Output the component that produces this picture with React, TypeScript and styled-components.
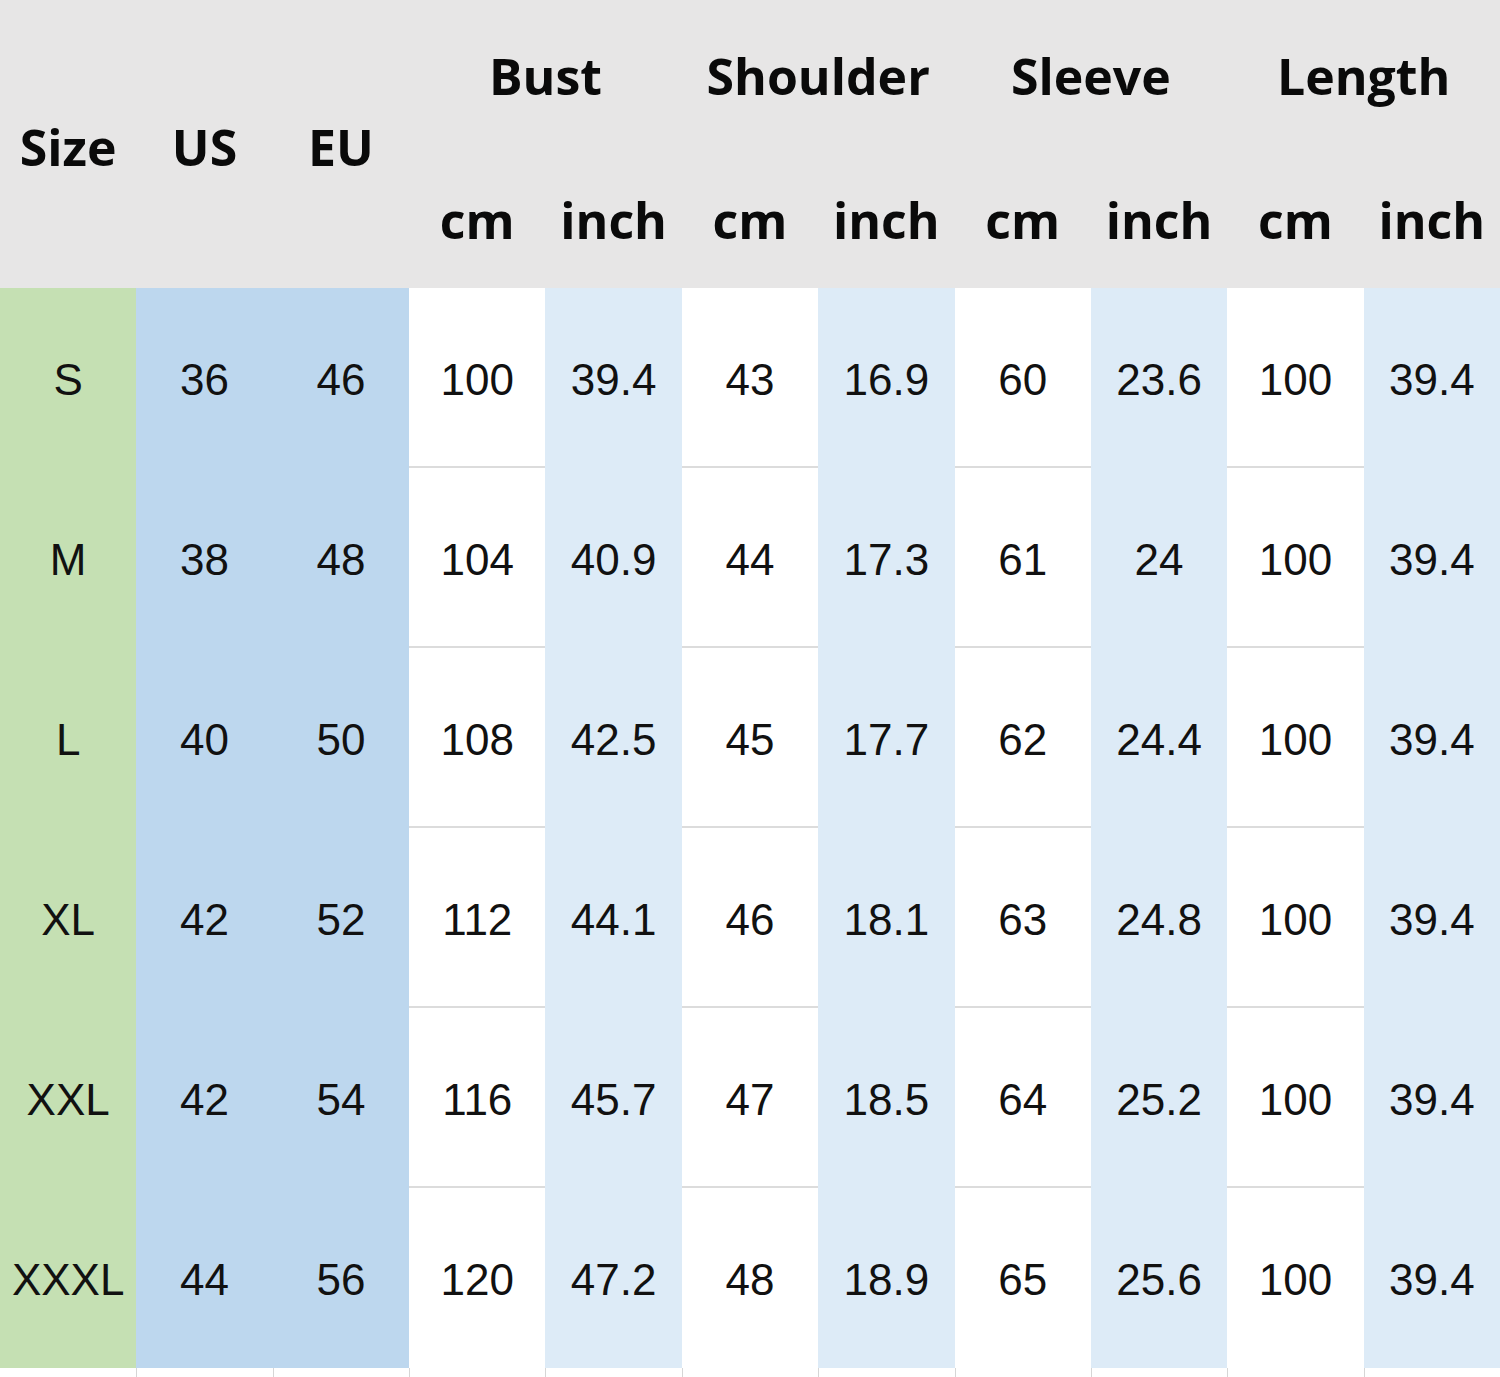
import React from "react";
import styled, { createGlobalStyle } from "styled-components";

const GlobalStyle = createGlobalStyle`
  html, body {
    margin: 0;
    padding: 0;
    background: #ffffff;
  }
`;

type Kind = "size" | "region" | "cm" | "inch";

const fills: Record<Kind, string> = {
  size: "#c5e0b3",
  region: "#bdd7ee",
  cm: "#ffffff",
  inch: "#ddebf7",
};

const Table = styled.div`
  width: 1500px;
  display: grid;
  grid-template-columns: repeat(11, 1fr);
  grid-template-rows: 156px 132px repeat(6, 180px) 9px;
  background: #ffffff;
`;

const HeadCell = styled.div<{ $rows?: number; $cols?: number }>`
  grid-row: span ${(p) => p.$rows ?? 1};
  grid-column: span ${(p) => p.$cols ?? 1};
  background: #e7e6e6;
  display: flex;
  align-items: center;
  justify-content: center;
  font-family: "Open Sans", "DejaVu Sans", sans-serif;
  font-weight: 700;
  font-size: 50px;
  color: #0a0a0a;
  white-space: nowrap;
`;

const TitleText = styled.span<{ $shift?: number }>`
  transform: translateY(${(p) => p.$shift ?? 0}px);
`;

const BodyCell = styled.div<{ $kind: Kind; $line: boolean }>`
  background: ${(p) => fills[p.$kind]};
  display: flex;
  align-items: center;
  justify-content: center;
  font-family: "Liberation Sans", Arial, sans-serif;
  font-size: 44px;
  color: #111111;
  box-sizing: border-box;
  border-bottom: 2px solid
    ${(p) => (p.$line && p.$kind === "cm" ? "#dcdcdc" : "transparent")};
  padding-top: 6px;
`;

const Tick = styled.div<{ $first: boolean }>`
  box-sizing: border-box;
  border-left: 1px solid ${(p) => (p.$first ? "transparent" : "#d6d6d6")};
`;

const groups = ["Bust", "Shoulder", "Sleeve", "Length"];
const kinds: Kind[] = ["size", "region", "region", "cm", "inch", "cm", "inch", "cm", "inch", "cm", "inch"];

const rows: string[][] = [
  ["S", "36", "46", "100", "39.4", "43", "16.9", "60", "23.6", "100", "39.4"],
  ["M", "38", "48", "104", "40.9", "44", "17.3", "61", "24", "100", "39.4"],
  ["L", "40", "50", "108", "42.5", "45", "17.7", "62", "24.4", "100", "39.4"],
  ["XL", "42", "52", "112", "44.1", "46", "18.1", "63", "24.8", "100", "39.4"],
  ["XXL", "42", "54", "116", "45.7", "47", "18.5", "64", "25.2", "100", "39.4"],
  ["XXXL", "44", "56", "120", "47.2", "48", "18.9", "65", "25.6", "100", "39.4"],
];

const App: React.FC = () => {
  return (
    <>
      <GlobalStyle />
      <Table>
        {["Size", "US", "EU"].map((t) => (
          <HeadCell key={t} $rows={2}>
            <TitleText $shift={3}>{t}</TitleText>
          </HeadCell>
        ))}
        {groups.map((g) => (
          <HeadCell key={g} $cols={2}>
            <TitleText $shift={-2}>{g}</TitleText>
          </HeadCell>
        ))}
        {groups.map((g) => (
          <React.Fragment key={g + "-units"}>
            <HeadCell>
              <TitleText $shift={-2}>cm</TitleText>
            </HeadCell>
            <HeadCell>
              <TitleText $shift={-2}>inch</TitleText>
            </HeadCell>
          </React.Fragment>
        ))}
        {rows.map((row, r) =>
          row.map((value, c) => (
            <BodyCell key={`${r}-${c}`} $kind={kinds[c]} $line={r < rows.length - 1}>
              {value}
            </BodyCell>
          ))
        )}
        {kinds.map((_, c) => (
          <Tick key={`tick-${c}`} $first={c === 0} />
        ))}
      </Table>
    </>
  );
};

export default App;
